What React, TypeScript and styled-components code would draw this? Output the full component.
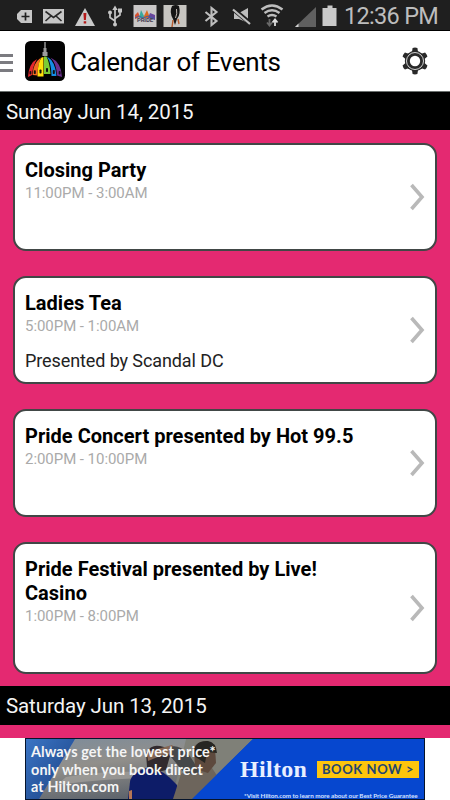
import React from 'react';
import styled, { createGlobalStyle } from 'styled-components';

const GlobalStyle = createGlobalStyle`
  * { box-sizing: border-box; }
  body { margin: 0; background: #fff; font-family: Roboto, sans-serif; }
`;

const Screen = styled.main`
  width: 450px;
  height: 800px;
  overflow: hidden;
  display: flex;
  flex-direction: column;
  background: #fff;
`;

const StatusBar = styled.div`
  height: 31px;
  flex: none;
  background: #1f1f1f;
  border-bottom: 1px solid #000;
  display: flex;
`;

const StatusIcons = styled.svg`
  display: block;
  flex: none;
`;

const Clock = styled.time`
  color: #bdbdbd;
  font-size: 23.5px;
  line-height: 33px;
  height: 30px;
  letter-spacing: -0.7px;
  white-space: nowrap;
`;

const Header = styled.header`
  height: 61px;
  flex: none;
  border-bottom: 1px solid #6b706e;
  display: flex;
  align-items: center;
`;

const MenuLines = styled.div`
  width: 13px;
  height: 18px;
  display: flex;
  flex-direction: column;
  justify-content: space-between;
  margin-right: 12px;
  margin-top: 3px;
`;

const MenuLine = styled.span`
  height: 3px;
  background: #7b7b80;
`;

const AppTitle = styled.h1`
  margin: 1px 0 0 5px;
  flex: 1;
  font-size: 26px;
  line-height: 36px;
  font-weight: 400;
  letter-spacing: -0.35px;
  white-space: nowrap;
  color: #000;
`;

const Gear = styled.svg`
  margin: 0 20px 0 0;
`;

const DayHeader = styled.h2<{ $height: number }>`
  margin: 0;
  height: ${(p) => p.$height}px;
  flex: none;
  padding-left: 6px;
  background: #000;
  color: #f4f4f4;
  font-size: 20.5px;
  font-weight: 400;
  letter-spacing: -0.1px;
  line-height: ${(p) => p.$height + 2}px;
  white-space: nowrap;
`;

const EventList = styled.div<{ $height: number }>`
  height: ${(p) => p.$height}px;
  flex: none;
  background: #e42971;
  padding: 13px 13px 0;
  display: flex;
  flex-direction: column;
  gap: 25px;
`;

const Card = styled.article<{ $tall?: boolean }>`
  height: ${(p) => (p.$tall ? 132 : 108)}px;
  flex: none;
  border: 2px solid #414746;
  border-radius: 13px;
  background: #fff;
  display: flex;
  align-items: center;
  padding: 0 10px;
`;

const Details = styled.div`
  flex: 1;
  align-self: stretch;
  padding-top: 13px;
`;

const EventTitle = styled.h3`
  margin: 0;
  max-width: 340px;
  font-size: 20px;
  line-height: 24px;
  font-weight: 700;
  letter-spacing: 0.02px;
  color: #000;
`;

const EventTime = styled.p`
  margin: 0;
  font-size: 15px;
  line-height: 22px;
  font-weight: 400;
  letter-spacing: -0.05px;
  color: #aaa;
`;

const Note = styled.p`
  margin: 14px 0 0;
  font-size: 18px;
  line-height: 20px;
  letter-spacing: -0.1px;
  color: #222;
`;

const AdRow = styled.div`
  height: 63px;
  display: flex;
  justify-content: center;
`;

const Ad = styled.aside`
  position: relative;
  width: 400px;
  height: 62px;
  border: 1px solid #06142b;
  background: #0647cf;
  overflow: hidden;
`;

const AdArt = styled.svg`
  display: block;
`;

const Pitch = styled.div`
  position: absolute;
  left: 5px;
  top: 4px;
  font: 700 14.4px/17.5px Lato, sans-serif;
  letter-spacing: 0.12px;
  color: #f5f5f5;
  white-space: pre-line;
`;

const Brand = styled.div`
  position: absolute;
  left: 214px;
  top: 17px;
  font: 700 24px/27px "Liberation Serif", serif;
  letter-spacing: 0.3px;
  color: #e8efff;
`;

const BookButton = styled.div`
  position: absolute;
  left: 291px;
  top: 22px;
  width: 102px;
  height: 17px;
  background: #fdc50c;
  color: #24456f;
  font: 700 13px/17px Lato, sans-serif;
  letter-spacing: 0.6px;
  text-align: center;
  white-space: nowrap;
`;

const FinePrint = styled.div`
  position: absolute;
  left: 218px;
  top: 52px;
  font: 700 6.3px/9px Lato, sans-serif;
  letter-spacing: -0.04px;
  color: #d5e2ff;
  white-space: nowrap;
`;

const Indicators = () => (
  <StatusIcons width="344" height="30" viewBox="0 0 344 30">
    <path d="M21 10h11v13H21l-4-4v-5z" fill="#c6c6c6" />
    <path d="M25.5 12.5v8M21.5 16.5h8" stroke="#1f1f1f" strokeWidth="1.7" />
    <rect x="43" y="9" width="21" height="14.5" fill="#c6c6c6" />
    <path d="M45.5 11.5l8 6 8-6M45.5 21l5.5-5M61.5 21L56 16" fill="none" stroke="#292929" strokeWidth="1.6" />
    <path d="M85 8l10 18H75z" fill="#cacaca" />
    <path d="M83.4 13h3l-.5 7h-2zM83.7 21.3h2.5v2.2h-2.5z" fill="#b51919" />
    <g stroke="#c6c6c6" fill="none" strokeWidth="1.7">
      <path d="M115 9v15M115 21l-5-3.5V13M115 18.5l5-3.5v-4" />
    </g>
    <path d="M115 5.5l2.7 4.5h-5.4zM118 8.5h4v4h-4z" fill="#c6c6c6" />
    <circle cx="110" cy="12.5" r="2" fill="#c6c6c6" />
    <circle cx="115" cy="24.5" r="2" fill="#c6c6c6" />
    <rect x="133.5" y="5" width="23" height="22" fill="#c9c7c7" />
    <path d="M135 19v-4l3-3 2 5z" fill="#d7512f" />
    <path d="M139 18l2-8 4 8z" fill="#39a99c" />
    <path d="M143 18l4-8 3 8z" fill="#dc6c20" />
    <path d="M148 18l2-5 5 2v5z" fill="#68459c" />
    <path d="M135 18l4-2 4 2 5-2 7 3" fill="none" stroke="#435fa4" />
    <text x="137" y="22" fontSize="6" fontWeight="700" fill="#484155" textLength="16">PRIDE</text>
    <rect x="163.5" y="5" width="23" height="22" fill="#c7c5c1" />
    <path d="M172 6q4-2 7 0 2 8-2 13l-2 6-2-6q-4-7-1-13" fill="#151515" />
    <path d="M176.5 9q1 5-1 9" stroke="#efe4dd" strokeWidth=".8" fill="none" />
    <path d="M173 20l-1 7M178 19l1 5" stroke="#b65b2d" strokeWidth="1.4" />
    <path d="M205.5 12l11 9-5 4V8l5 4-11 9" fill="none" stroke="#bebebe" strokeWidth="2.1" />
    <path d="M234 13h5l9-5v15l-9-4h-5z" fill="#bebebe" />
    <path d="M233 9l18 15" stroke="#1f1f1f" strokeWidth="4.5" />
    <path d="M233 9.5l17 14.5" stroke="#bebebe" strokeWidth="2.2" />
    <g fill="none" stroke="#bebebe" strokeWidth="2.4">
      <path d="M261.5 9.5q10.5-8 21 0M264.5 13q7.5-5.5 15 0M267.5 16.5q4.5-3 9 0" />
    </g>
    <path d="M269.5 19v6M267 22.5l2.5 3 2.5-3" stroke="#696969" strokeWidth="1.8" fill="none" />
    <path d="M275 26v-6M272.5 22.5l2.5-3 2.5 3" stroke="#dedede" strokeWidth="1.8" fill="none" />
    <path d="M316 7v20h-21z" fill="#606060" />
    <path d="M295 27l3.5-3.5V27z" fill="#d2d2d2" />
    <path d="M327.5 5.5h5V8h4v18h-14V8h5z" fill="#c9c9c9" />
  </StatusIcons>
);

const DomeLogo = () => (
  <svg width="40" height="40" viewBox="0 0 40 40">
    <rect width="40" height="40" rx="5.5" fill="#020202" />
    <path d="M3 36Q4 22 12 18Q7.5 26 7 34z" fill="#e5272e" />
    <path d="M7.5 34Q8 22 16 16.500Q12.500 24 12.500 34.500z" fill="#f36b21" />
    <path d="M12.500 35.500Q12.500 22 16.500 16.500L18.500 16v19.500z" fill="#ffe00b" />
    <path d="M19 33V15.500h2.500q3.500 7 4 17.500z" fill="#7bcb35" />
    <path d="M22 15.500q8.500 5 9.500 19.500h-5q0-12-4.500-19.500" fill="#158ce3" />
    <path d="M25.500 16.500q11 5 11.500 19.500l-5-1.500q-.5-12-6.500-18" fill="#6b318f" />
    <path d="M20 1v7" stroke="#dadada" />
    <path d="M18.500 7h3v4h1v4h-5v-4h1z" fill="#9c9c9c" />
    <g fill="#111">
      <rect x="4.500" y="30" width="1.800" height="3.500" rx=".8" />
      <rect x="8.800" y="29.300" width="2" height="3.800" rx=".8" />
      <rect x="14.500" y="28.500" width="2" height="4" rx=".8" />
      <rect x="21" y="27" width="2" height="4" rx=".8" />
      <rect x="27.800" y="29" width="2" height="4" rx=".8" />
      <rect x="33.700" y="30" width="1.800" height="3.500" rx=".8" />
    </g>
  </svg>
);

const GearIcon = () => (
  <Gear width="30" height="30" viewBox="0 0 30 30">
    <g fill="#292929">
      {[0, 60, 120, 180, 240, 300].map((angle) => (
        <path key={angle} d="M10.800 7l1.200-1.200.6-3.800q2.400-.8 4.800 0l.6 3.800L19.200 7z" transform={`rotate(${angle} 15 15)`} />
      ))}
      <circle cx="15" cy="15" r="10.200" />
    </g>
    <circle cx="15" cy="15" r="8.500" fill="none" stroke="#d2d2d2" strokeWidth="1" />
    <circle cx="15" cy="15" r="5.200" fill="#fff" />
  </Gear>
);

const Chevron = () => (
  <svg width="16" height="28" viewBox="0 0 16 28">
    <path d="M2.500 2l10.500 12L2.500 26" fill="none" stroke="#b9b9b9" strokeWidth="3.600" />
  </svg>
);

const BannerArt = () => (
  <AdArt width="398" height="60" viewBox="0 0 398 60">
    <defs>
      <linearGradient id="sky" x1="0" y1="0" x2="1" y2="1"><stop stopColor="#3b75c5" /><stop offset="1" stopColor="#193f80" /></linearGradient>
      <linearGradient id="road" x1="0" y1="0" x2=".4" y2="1"><stop stopColor="#7d8c9b" /><stop offset=".45" stopColor="#918f8b" /><stop offset="1" stopColor="#5e646c" /></linearGradient>
      <filter id="soft"><feGaussianBlur stdDeviation=".6" /></filter>
    </defs>
    <rect width="398" height="60" fill="#0647cf" />
    <path d="M0 0h49L13 60H0z" fill="url(#sky)" />
    <path d="M49 0h154l-37 60H13z" fill="url(#road)" />
    <path d="M160 0h67l-61 60h-20z" fill="#7f8078" />
    <g filter="url(#soft)">
      <path d="M40 38q45-8 91-4v5q-50 0-100 7z" fill="#b3b0aa" opacity=".5" />
      <path d="M102 60l2-17q1-10 20-15 14 3 27 18l2 14z" fill="#111b67" />
      <path d="M121 28l-1-14q5-9 14-7 9 1 10 10l-4 14-12 3z" fill="#332c2f" />
      <path d="M121 13l25-7 7 7-19 4-12 5z" fill="#846653" />
      <path d="M147 60l8-25 13-9 18 3 8 12-4 19z" fill="#6d655b" />
      <path d="M144 8q8-3 18 6l12 19-14 3-15-18z" fill="#44464a" />
      <path d="M169 30l-1-22q9-11 21 1l1 15-8 10z" fill="#5d493d" />
      <path d="M168 17q-1-16 14-15 8 1 9 12l-10-1-2 11z" fill="#272520" />
      <path d="M103 60v-8l3-1v9z" fill="#b47655" />
    </g>
    <path d="M227 0h171v60H166z" fill="#0647cf" />
  </AdArt>
);

interface EventItem {
  title: string;
  time: string;
  note?: string;
  tall?: boolean;
}

const events: EventItem[] = [
  { title: 'Closing Party', time: '11:00PM - 3:00AM' },
  { title: 'Ladies Tea', time: '5:00PM - 1:00AM', note: 'Presented by Scandal DC' },
  { title: 'Pride Concert presented by Hot 99.5', time: '2:00PM - 10:00PM' },
  { title: 'Pride Festival presented by Live! Casino', time: '1:00PM - 8:00PM', tall: true },
];

export default function App() {
  return (
    <>
      <GlobalStyle />
      <Screen>
        <StatusBar>
          <Indicators />
          <Clock>12:36 PM</Clock>
        </StatusBar>
        <Header>
          <MenuLines><MenuLine /><MenuLine /><MenuLine /></MenuLines>
          <DomeLogo />
          <AppTitle>Calendar of Events</AppTitle>
          <GearIcon />
        </Header>
        <DayHeader $height={38}>Sunday Jun 14, 2015</DayHeader>
        <EventList $height={556}>
          {events.map((event) => (
            <Card key={event.title} $tall={event.tall}>
              <Details>
                <EventTitle>{event.title}</EventTitle>
                <EventTime>{event.time}</EventTime>
                {event.note && <Note>{event.note}</Note>}
              </Details>
              <Chevron />
            </Card>
          ))}
        </EventList>
        <DayHeader $height={39}>Saturday Jun 13, 2015</DayHeader>
        <EventList $height={12} />
        <AdRow>
          <Ad>
            <BannerArt />
            <Pitch>{'Always get the lowest price*\nonly when you book direct\nat Hilton.com'}</Pitch>
            <Brand>Hilton</Brand>
            <BookButton>BOOK NOW &gt;</BookButton>
            <FinePrint>*Visit Hilton.com to learn more about our Best Price Guarantee</FinePrint>
          </Ad>
        </AdRow>
      </Screen>
    </>
  );
}
